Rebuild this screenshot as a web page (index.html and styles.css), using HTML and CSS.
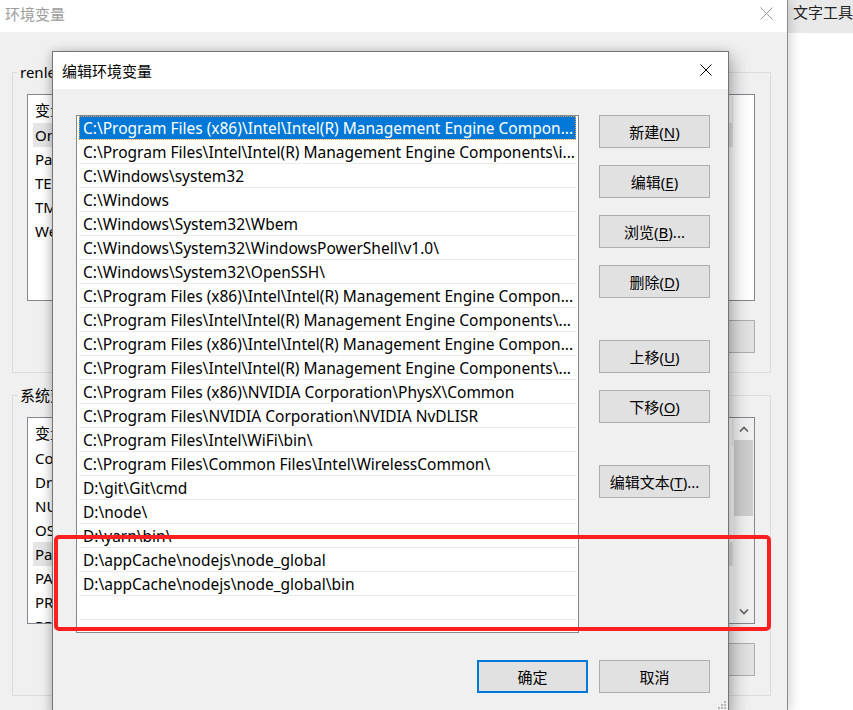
FILE: index.html
```html
<!DOCTYPE html>
<html lang="zh-CN">
<head>
<meta charset="utf-8">
<title>编辑环境变量</title>
<link rel="stylesheet" href="styles.css">
</head>
<body>
<div class="desk">
  <div class="outer">
    <div class="outer-title">
      <span>环境变量</span>
      <svg class="x-icon" width="13" height="13" viewBox="0 0 13 13"><path d="M0.5 0.5L12.5 12.5M12.5 0.5L0.5 12.5" stroke="#9a9a9a" stroke-width="1" fill="none"/></svg>
    </div>
    <div class="outer-body">
      <div class="group">
        <div class="group-label">renle 的用户变量(U)</div>
        <div class="bglist">
          <div class="bgtable">
            <div class="bghead"><span class="col1">变量</span><span class="col2">值</span></div>
            <div class="bgrow sel">OneDrive</div>
            <div class="bgrow">Path</div>
            <div class="bgrow">TEMP</div>
            <div class="bgrow">TMP</div>
            <div class="bgrow">WebStorm</div>
          </div>
        </div>
        <div class="bgbtns">
          <div class="btn bgbtn">新建(N)...</div>
          <div class="btn bgbtn">编辑(E)...</div>
          <div class="btn bgbtn">删除(D)</div>
        </div>
      </div>
      <div class="group">
        <div class="group-label">系统变量(S)</div>
        <div class="bglist">
          <div class="bgtable">
            <div class="bghead"><span class="col1">变量</span><span class="col2">值</span></div>
            <div class="bgrow">ComSpec</div>
            <div class="bgrow">DriverData</div>
            <div class="bgrow">NUMBER_OF_PROCESSORS</div>
            <div class="bgrow">OS</div>
            <div class="bgrow sel">Path</div>
            <div class="bgrow">PATHEXT</div>
            <div class="bgrow">PROCESSOR_ARCHITECTURE</div>
            <div class="bgrow">PROCESSOR_IDENTIFIER</div>
          </div>
          <div class="vscroll">
            <div class="sbtn"><svg width="10" height="6" viewBox="0 0 10 6"><path d="M1 5.5L5 1.5L9 5.5" stroke="#606060" stroke-width="1.6" fill="none"/></svg></div>
            <div class="strack"><div class="sthumb"></div></div>
            <div class="sbtn"><svg width="10" height="6" viewBox="0 0 10 6"><path d="M1 0.5L5 4.5L9 0.5" stroke="#606060" stroke-width="1.6" fill="none"/></svg></div>
          </div>
        </div>
        <div class="bgbtns">
          <div class="btn bgbtn">新建(W)...</div>
          <div class="btn bgbtn">编辑(I)...</div>
          <div class="btn bgbtn">删除(L)</div>
        </div>
      </div>
    </div>
  </div>
  <div class="side">
    <div class="side-top">文字工具</div>
  </div>
</div>

<div class="inner">
  <div class="inner-title">
    <span>编辑环境变量</span>
    <svg class="x-icon" width="12" height="12" viewBox="0 0 12 12"><path d="M0.5 0.5L11.5 11.5M11.5 0.5L0.5 11.5" stroke="#000" stroke-width="1" fill="none"/></svg>
  </div>
  <div class="inner-body">
    <div class="main">
      <div class="pathlist">
        <div class="prow sel">C:\Program Files (x86)\Intel\Intel(R) Management Engine Compon...</div>
        <div class="prow">C:\Program Files\Intel\Intel(R) Management Engine Components\i...</div>
        <div class="prow">C:\Windows\system32</div>
        <div class="prow">C:\Windows</div>
        <div class="prow">C:\Windows\System32\Wbem</div>
        <div class="prow">C:\Windows\System32\WindowsPowerShell\v1.0\</div>
        <div class="prow">C:\Windows\System32\OpenSSH\</div>
        <div class="prow">C:\Program Files (x86)\Intel\Intel(R) Management Engine Compon...</div>
        <div class="prow">C:\Program Files\Intel\Intel(R) Management Engine Components\...</div>
        <div class="prow">C:\Program Files (x86)\Intel\Intel(R) Management Engine Compon...</div>
        <div class="prow">C:\Program Files\Intel\Intel(R) Management Engine Components\...</div>
        <div class="prow">C:\Program Files (x86)\NVIDIA Corporation\PhysX\Common</div>
        <div class="prow">C:\Program Files\NVIDIA Corporation\NVIDIA NvDLISR</div>
        <div class="prow">C:\Program Files\Intel\WiFi\bin\</div>
        <div class="prow">C:\Program Files\Common Files\Intel\WirelessCommon\</div>
        <div class="prow">D:\git\Git\cmd</div>
        <div class="prow">D:\node\</div>
        <div class="prow">D:\yarn\bin\</div>
        <div class="prow">D:\appCache\nodejs\node_global</div>
        <div class="prow">D:\appCache\nodejs\node_global\bin</div>
        <div class="prow empty"></div>
      </div>
      <div class="sidebtns">
        <div class="btn">新建(<u>N</u>)</div>
        <div class="btn">编辑(<u>E</u>)</div>
        <div class="btn">浏览(<u>B</u>)...</div>
        <div class="btn">删除(<u>D</u>)</div>
        <div class="btn sep">上移(<u>U</u>)</div>
        <div class="btn">下移(<u>O</u>)</div>
        <div class="btn sep">编辑文本(<u>T</u>)...</div>
      </div>
    </div>
    <div class="footer">
      <div class="btn default">确定</div>
      <div class="btn">取消</div>
    </div>
  </div>
  <svg class="grip" width="8" height="8" viewBox="0 0 8 8">
    <rect x="6" y="0" width="2" height="2" fill="#b8b8b8"/>
    <rect x="3" y="3" width="2" height="2" fill="#b8b8b8"/>
    <rect x="6" y="3" width="2" height="2" fill="#b8b8b8"/>
    <rect x="0" y="6" width="2" height="2" fill="#b8b8b8"/>
    <rect x="3" y="6" width="2" height="2" fill="#b8b8b8"/>
    <rect x="6" y="6" width="2" height="2" fill="#b8b8b8"/>
  </svg>
</div>

<div class="redmark"></div>
</body>
</html>
```

FILE: styles.css
```css
* { box-sizing: border-box; }
html, body { margin: 0; padding: 0; }
body {
  width: 853px;
  height: 710px;
  overflow: hidden;
  position: relative;
  background: #fff;
  color: #000;
  font-family: "Noto Sans", "Noto Sans CJK SC", sans-serif;
  font-size: 15px;
}
.desk { display: flex; height: 710px; }

/* background window */
.outer {
  width: 788px;
  flex: none;
  height: 710px;
  background: #f0f0f0;
  border-right: 1px solid #8c8c8c;
  box-shadow: 3px 0 10px rgba(0,0,0,0.16);
  position: relative;
  z-index: 1;
  display: flex;
  flex-direction: column;
}
.outer-title {
  height: 32px;
  flex: none;
  background: #fff;
  display: flex;
  align-items: center;
  justify-content: space-between;
  padding: 0 14px 6px 5px;
  color: #9c9c9c;
}
.x-icon { display: block; }
.outer-body {
  padding: 40px 16px 0 12px;
  display: flex;
  flex-direction: column;
  gap: 22px;
}
.group {
  height: 301px;
  border: 1px solid #dcdcdc;
  padding: 0 15px 0 14px;
  display: flex;
  flex-direction: column;
}
.group-label {
  align-self: flex-start;
  margin: -11px 0 0 -9px;
  padding: 0 2px;
  height: 20px;
  line-height: 20px;
  background: #f0f0f0;
}
.bglist {
  margin-top: 12px;
  height: 207px;
  flex: none;
  border: 1px solid #828790;
  background: #fff;
  display: flex;
  overflow: hidden;
}
.bgtable {
  width: 705px;
  flex: none;
  padding-left: 5px;
}
.bghead {
  height: 27px;
  display: flex;
  align-items: center;
  border-right: 1px solid #e5e5e5;
  margin-top: 1px;
}
.bghead .col1 { width: 180px; padding-left: 2px; }
.bghead .col2 { flex: 1; }
.bgrow {
  height: 24px;
  line-height: 24px;
  padding-left: 2px;
}
.bgrow.sel { background: #e5e5e5; }
.vscroll {
  width: 21px;
  flex: none;
  background: #f0f0f0;
  display: flex;
  flex-direction: column;
  padding: 0 1px;
}
.sbtn {
  height: 22px;
  flex: none;
  display: flex;
  align-items: center;
  justify-content: center;
}
.strack { flex: 1; }
.sthumb { height: 76px; background: #cdcdcd; }
.bgbtns {
  margin-top: 19px;
  display: flex;
  justify-content: flex-end;
  gap: 11px;
}
.bgbtn { height: 32px; }

/* side app */
.side { flex: 1; background: #fff; }
.side-top {
  height: 33px;
  background: #e9e9e9;
  padding: 0 0 0 5px;
  line-height: 24px;
  color: #222;
  white-space: nowrap;
  overflow: hidden;
}

/* buttons */
.btn {
  width: 111px;
  height: 33px;
  flex: none;
  background: #e1e1e1;
  border: 1px solid #adadad;
  display: flex;
  align-items: center;
  justify-content: center;
  white-space: nowrap;
  color: #000;
}
.btn u { text-underline-offset: 2px; }

/* edit dialog */
.inner {
  position: absolute;
  left: 52px;
  top: 51px;
  width: 677px;
  height: 662px;
  z-index: 2;
  background: #f0f0f0;
  border: 1px solid #757575;
  box-shadow: 4px 6px 16px rgba(0,0,0,0.30), -2px 0 8px rgba(0,0,0,0.12);
  display: flex;
  flex-direction: column;
}
.inner-title {
  height: 37px;
  flex: none;
  background: #fff;
  display: flex;
  align-items: center;
  justify-content: space-between;
  padding: 0 16px 1px 9px;
}
.inner-body {
  padding: 26px 18px 0 23px;
  display: flex;
  flex-direction: column;
}
.main { display: flex; gap: 20px; }
.pathlist {
  width: 503px;
  height: 518px;
  flex: none;
  border: 1px solid #828790;
  background: #fff;
  padding: 0 2px;
  overflow: hidden;
  font-size: 15.5px;
}
.prow {
  height: 24px;
  line-height: 24px;
  border-bottom: 1px solid #ececec;
  padding: 0 0 0 4px;
  white-space: nowrap;
  overflow: hidden;
  text-overflow: ellipsis;
}
.prow.sel {
  background: #0078d7;
  background-clip: padding-box;
  color: #fff;
  outline: 1px dotted #f3a54a;
  outline-offset: -1px;
}
.sidebtns { display: flex; flex-direction: column; gap: 17px; }
.sidebtns .sep { margin-top: 25px; }
.footer {
  margin-top: 27px;
  display: flex;
  justify-content: flex-end;
  gap: 11px;
}
.btn.default { border: 2px solid #0078d7; }
.grip { position: absolute; right: 2px; bottom: 3px; }

/* annotation */
.redmark {
  position: absolute;
  left: 54px;
  top: 535px;
  width: 717px;
  height: 96px;
  border: 4px solid #fe2020;
  border-radius: 5px;
  z-index: 3;
}
```
